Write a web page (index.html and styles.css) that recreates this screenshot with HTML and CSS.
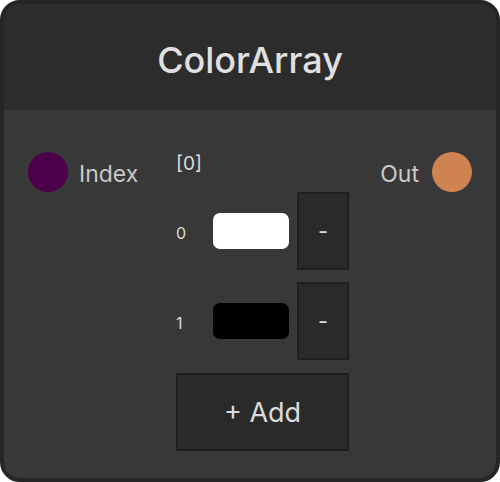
FILE: index.html
```html
<!DOCTYPE html>
<html lang="en">
<head>
    <meta charset="UTF-8">
    <meta name="viewport" content="width=device-width, initial-scale=1.0">
    <title>ColorArray</title>
    <link rel="stylesheet" href="styles.css">
</head>
<body>
    <div class="node">
        <div class="node-header">
            <h1>ColorArray</h1>
        </div>
        <div class="node-body">
            <div class="port port-in">
                <span class="dot dot-index"></span>
                <span class="port-name">Index</span>
            </div>
            <div class="array-editor">
                <div class="selected">[0]</div>
                <div class="item-row">
                    <span class="item-index">0</span>
                    <span class="swatch" style="background: #ffffff;"></span>
                    <button class="remove-btn">-</button>
                </div>
                <div class="item-row">
                    <span class="item-index">1</span>
                    <span class="swatch" style="background: #000000;"></span>
                    <button class="remove-btn">-</button>
                </div>
                <button class="add-btn">+ Add</button>
            </div>
            <div class="port port-out">
                <span class="port-name">Out</span>
                <span class="dot dot-out"></span>
            </div>
        </div>
    </div>
</body>
</html>
```

FILE: styles.css
```css
* {
    margin: 0;
    padding: 0;
    box-sizing: border-box;
}

body {
    background-color: #ffffff;
    font-family: Inter, "Noto Sans", sans-serif;
}

.node {
    width: 500px;
    height: 482px;
    border: 4px solid #252525;
    border-radius: 20px;
    background-color: #383838;
    overflow: hidden;
    display: flex;
    flex-direction: column;
}

.node-header {
    height: 106px;
    background-color: #2c2c2c;
    display: flex;
    justify-content: center;
    align-items: center;
}

.node-header h1 {
    font-size: 36px;
    font-weight: 500;
    color: #e0e0e0;
    padding-top: 6px;
}

.node-body {
    flex: 1;
    display: flex;
    padding: 42px 24px 0 24px;
}

.port {
    display: flex;
    align-items: center;
    height: 40px;
    gap: 11px;
}

.port-in {
    width: 148px;
}

.port-out {
    flex: 1;
    justify-content: flex-end;
    gap: 13px;
}

.dot {
    width: 40px;
    height: 40px;
    border-radius: 50%;
}

.dot-index {
    background-color: #4b0049;
}

.dot-out {
    background-color: #cf8350;
}

.port-name {
    font-size: 23px;
    color: #c8c8c8;
    padding-top: 3px;
}

.array-editor {
    width: 173px;
    display: flex;
    flex-direction: column;
}

.selected {
    font-size: 19px;
    line-height: 24px;
    color: #dcdcdc;
    margin-bottom: 16px;
}

.item-row {
    display: flex;
    align-items: center;
    height: 78px;
    margin-bottom: 12px;
}

.item-index {
    width: 37px;
    font-size: 16px;
    color: #dcdcdc;
    padding-top: 4px;
}

.swatch {
    width: 76px;
    height: 36px;
    border-radius: 7px;
    margin-right: 8px;
}

.remove-btn,
.add-btn {
    background-color: #2a2a2a;
    border: 2px solid #1f1f1f;
    color: #dcdcdc;
    font-family: inherit;
}

.remove-btn {
    width: 52px;
    height: 78px;
    font-size: 22px;
}

.add-btn {
    height: 78px;
    margin-top: 1px;
    font-size: 27px;
}
```
